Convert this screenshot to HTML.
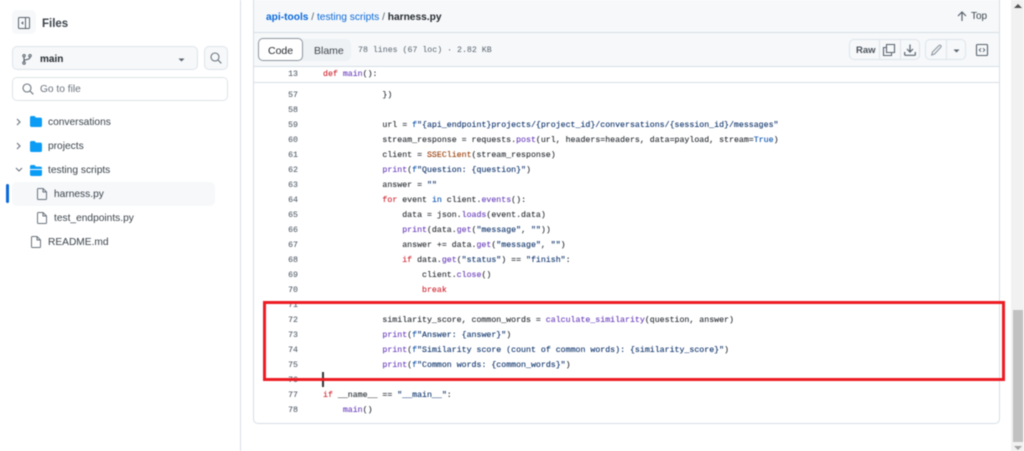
<!DOCTYPE html>
<html lang="en"><head><meta charset="utf-8"><title>harness.py</title>
<style>
html,body{margin:0;padding:0;width:1024px;height:451px;overflow:hidden;background:#fff}
body{font-family:"Liberation Sans",sans-serif;color:#1f2328;position:relative}
#p{position:absolute;left:0;top:0;width:1024px;height:451px;filter:blur(.4px)}
.a{position:absolute;box-sizing:border-box}
.t{position:absolute;white-space:nowrap;line-height:16px;font-size:10.2px;margin-top:1px}
.c{position:absolute;left:323px;margin-top:2px;font:8.25px/15px "Liberation Mono",monospace;white-space:pre;color:#24292f;-webkit-text-stroke:.1px currentColor}
.n{position:absolute;left:270px;width:28px;margin-top:2px;text-align:right;font:8.25px/15px "Liberation Mono",monospace;color:#59636e;-webkit-text-stroke:.1px currentColor}
.k{color:#cf222e}.f{color:#6639ba}.s{color:#0a3069}.b{color:#0550ae}.y{color:#953800}
svg{position:absolute;overflow:visible}
</style></head><body><div id="p">

<!-- sidebar -->
<div class="a" style="left:240px;top:0;width:1px;height:451px;background:#d8dfe6"></div>
<div class="a" style="left:12px;top:10px;width:24px;height:24px;border-radius:5px;background:#f6f8fa"></div>
<svg style="left:18px;top:17px" width="12" height="12" viewBox="0 0 12 12" fill="none" stroke="#59636e" stroke-width="1"><rect x=".5" y=".5" width="11" height="11" rx="1"/><path d="M7.5 .5v11"/><path d="M5 4.5v3L3.4 6z" fill="#59636e" stroke-width=".5"/></svg>
<div class="t" style="left:42px;top:15px;font-size:11.5px;font-weight:700;color:#3b434b">Files</div>

<div class="a" style="left:12px;top:46px;width:186px;height:24px;border:1px solid #dfe4ea;border-radius:5px;background:#f6f8fa"></div>
<svg style="left:22px;top:54px" width="10" height="11" viewBox="0 0 10 11" fill="none" stroke="#59636e" stroke-width="1.1"><circle cx="2" cy="1.8" r="1.2"/><circle cx="2" cy="9" r="1.2"/><circle cx="8" cy="1.8" r="1.2"/><path d="M2 3v4.800M8 3c0 2.500-3 2.300-6 3.300"/></svg>
<div class="t" style="left:40px;top:51px;font-weight:700;color:#25292e;font-size:10px">main</div>
<svg style="left:178px;top:58px" width="7" height="4"><path d="M.5 .5h6L3.500 3.500z" fill="#59636e"/></svg>
<div class="a" style="left:204px;top:46px;width:24px;height:24px;border:1px solid #dfe4ea;border-radius:5px;background:#f6f8fa"></div>
<svg style="left:210px;top:52px" width="12" height="12" viewBox="0 0 12 12" fill="none" stroke="#6a737d" stroke-width="1.100"><circle cx="5" cy="5" r="4"/><path d="M8 8l3.300 3.300"/></svg>
<div class="a" style="left:12px;top:77px;width:216px;height:24px;border:1px solid #dfe4ea;border-radius:5px;background:#fff"></div>
<svg style="left:22px;top:83px" width="12" height="12" viewBox="0 0 12 12" fill="none" stroke="#6a737d" stroke-width="1.100"><circle cx="5" cy="5" r="4"/><path d="M8 8l3.300 3.300"/></svg>
<div class="t" style="left:40px;top:81px;color:#6a737d">Go to file</div>

<svg style="left:16px;top:118px" width="6" height="8" fill="none" stroke="#6a737d" stroke-width="1.100"><path d="M1 1l3 3-3 3"/></svg>
<svg style="left:30px;top:116px" width="12" height="11"><path d="M0 1.500C0 .6.600 0 1.500 0h3l1.500 1.600h4.500c.9 0 1.500.6 1.500 1.500v6.400c0 .9-.6 1.500-1.500 1.500h-9C.6 11 0 10.400 0 9.500z" fill="#0b9cf5"/></svg>
<div class="t" style="left:48px;top:114px;color:#3b434b">conversations</div>
<svg style="left:16px;top:142px" width="6" height="8" fill="none" stroke="#6a737d" stroke-width="1.100"><path d="M1 1l3 3-3 3"/></svg>
<svg style="left:30px;top:141px" width="12" height="11"><path d="M0 1.500C0 .6.600 0 1.500 0h3l1.500 1.600h4.500c.9 0 1.500.6 1.500 1.500v6.400c0 .9-.6 1.500-1.500 1.500h-9C.6 11 0 10.400 0 9.500z" fill="#0b9cf5"/></svg>
<div class="t" style="left:48px;top:138px;color:#3b434b">projects</div>
<svg style="left:15px;top:167px" width="8" height="6" fill="none" stroke="#6a737d" stroke-width="1.100"><path d="M1 1l3 3 3-3"/></svg>
<svg style="left:30px;top:165px" width="12" height="11"><path d="M0 1.500C0 .6.600 0 1.500 0h3l1.500 1.600h4.500c.9 0 1.500.6 1.500 1.500V4H0zM0 5h12v4.500c0 .9-.6 1.500-1.500 1.500h-9C.6 11 0 10.400 0 9.500z" fill="#0b9cf5"/></svg>
<div class="t" style="left:48px;top:162px;color:#3b434b">testing scripts</div>

<div class="a" style="left:12px;top:182px;width:203px;height:24px;border-radius:5px;background:#f6f8fa"></div>
<div class="a" style="left:6px;top:184px;width:3px;height:19px;border-radius:2px;background:#0969da"></div>
<svg style="left:37px;top:188px" width="10" height="12" fill="none" stroke="#6a737d" stroke-width="1"><path d="M.5 1.500c0-.6.400-1 1-1h4.500l3.500 3.500v6.500c0 .6-.4 1-1 1h-7c-.6 0-1-.4-1-1zM6 .5v3.500h3.500"/></svg>
<div class="t" style="left:54px;top:186px;color:#3b434b">harness.py</div>
<svg style="left:37px;top:212px" width="10" height="12" fill="none" stroke="#6a737d" stroke-width="1"><path d="M.5 1.500c0-.6.400-1 1-1h4.500l3.500 3.500v6.500c0 .6-.4 1-1 1h-7c-.6 0-1-.4-1-1zM6 .5v3.500h3.500"/></svg>
<div class="t" style="left:54px;top:210px;color:#3b434b">test_endpoints.py</div>
<svg style="left:31px;top:236px" width="10" height="12" fill="none" stroke="#6a737d" stroke-width="1"><path d="M.5 1.500c0-.6.400-1 1-1h4.500l3.500 3.500v6.500c0 .6-.4 1-1 1h-7c-.6 0-1-.4-1-1zM6 .5v3.500h3.500"/></svg>
<div class="t" style="left:48px;top:234px;color:#3b434b">README.md</div>

<!-- file box -->
<div class="a" style="left:253px;top:-6px;width:747px;height:430px;border:1px solid #d8dfe6;border-radius:5px;background:#fff"></div>
<div class="a" style="left:254px;top:0;width:745px;height:66px;background:#f6f8fa"></div>
<div class="a" style="left:254px;top:32px;width:745px;height:1px;background:#d8dfe6"></div>
<div class="a" style="left:254px;top:66px;width:745px;height:1px;background:#d8dfe6"></div>
<div class="a" style="left:254px;top:82px;width:745px;height:1px;background:#d8dfe6"></div>

<div class="t" style="left:266px;top:9px;color:#57606a"><span style="color:#0969da;font-weight:700">api-tools</span> / <span style="color:#0969da">testing scripts</span> / <b style="color:#25292e">harness.py</b></div>
<svg style="left:957px;top:11px" width="10" height="10" fill="none" stroke="#59636e" stroke-width="1.200"><path d="M5 10V1M1 5l4-4 4 4"/></svg>
<div class="t" style="left:971px;top:8px;color:#3b434b;font-size:10px">Top</div>

<div class="a" style="left:258px;top:39px;width:93px;height:22px;border-radius:5px;background:#eff2f5"></div>
<div class="a" style="left:258px;top:38px;width:45px;height:23px;border:1px solid #8c959f;border-radius:5px;background:#fff"></div>
<div class="t" style="left:268px;top:42px;color:#25292e;font-size:10.5px">Code</div>
<div class="t" style="left:314px;top:42px;color:#3b434b;font-size:10.5px">Blame</div>
<div class="t" style="left:358px;top:42px;font:8.25px/16px 'Liberation Mono',monospace;color:#59636e">78 lines (67 loc) · 2.82 KB</div>

<div class="a" style="left:849px;top:39px;width:71px;height:21px;border:1px solid #dfe4ea;border-radius:5px;background:#f6f8fa"></div>
<div class="a" style="left:879px;top:40px;width:1px;height:19px;background:#dfe4ea"></div>
<div class="a" style="left:900px;top:40px;width:1px;height:19px;background:#dfe4ea"></div>
<div class="t" style="left:856px;top:42px;font-size:9.500px;font-weight:700;color:#4a5159">Raw</div>
<svg style="left:883px;top:44px" width="12" height="12" fill="none" stroke="#59636e" stroke-width="1.100"><path d="M3.500 .5h8v8h-8zM3.500 3.500H.5v8h8V8.500"/></svg>
<svg style="left:904px;top:44px" width="12" height="12" fill="none" stroke="#59636e" stroke-width="1.200"><path d="M6 .5v7M3 5l3 3 3-3M.7 8v2.500c0 .5.400.8.800.8h9c.4 0 .8-.3.800-.8V8"/></svg>
<div class="a" style="left:925px;top:39px;width:41px;height:21px;border:1px solid #dfe4ea;border-radius:5px;background:#f6f8fa"></div>
<div class="a" style="left:946px;top:40px;width:1px;height:19px;background:#dfe4ea"></div>
<svg style="left:931px;top:44px" width="11" height="12" fill="none" stroke="#8c959f" stroke-width="1.100"><path d="M.7 11l.8-3L8 1.500c.5-.5 1.200-.5 1.700 0s.5 1.200 0 1.700L3.500 10z"/></svg>
<svg style="left:953px;top:49px" width="7" height="4"><path d="M.5 .5h6L3.500 3.500z" fill="#59636e"/></svg>
<svg style="left:976px;top:44px" width="12" height="12" fill="none" stroke="#59636e" stroke-width="1.100"><rect x=".5" y=".5" width="11" height="11" rx="1"/><path d="M5 4.200L3.200 6 5 7.800M7 4.200L8.800 6 7 7.800" stroke-width=".9"/></svg>

<!-- code -->
<div class="n" style="top:65px">13</div><div class="c" style="top:65px"><span class="k">def</span> <span class="f">main</span>():</div>

<div class="n" style="top:86px">57</div><div class="c" style="top:86px">            })</div>
<div class="n" style="top:101px">58</div>
<div class="n" style="top:116px">59</div><div class="c" style="top:116px">            url = <span class="b">f</span><span class="s">"{api_endpoint}projects/{project_id}/conversations/{session_id}/messages"</span></div>
<div class="n" style="top:131px">60</div><div class="c" style="top:131px">            stream_response = requests.<span class="f">post</span>(url, headers=headers, data=payload, stream=<span class="b">True</span>)</div>
<div class="n" style="top:146px">61</div><div class="c" style="top:146px">            client = <span class="y">SSEClient</span>(stream_response)</div>
<div class="n" style="top:161px">62</div><div class="c" style="top:161px">            <span class="f">print</span>(<span class="b">f</span><span class="s">"Question: {question}"</span>)</div>
<div class="n" style="top:176px">63</div><div class="c" style="top:176px">            answer = <span class="s">""</span></div>
<div class="n" style="top:191px">64</div><div class="c" style="top:191px">            <span class="k">for</span> event <span class="b">in</span> client.<span class="f">events</span>():</div>
<div class="n" style="top:206px">65</div><div class="c" style="top:206px">                data = json.<span class="f">loads</span>(event.data)</div>
<div class="n" style="top:221px">66</div><div class="c" style="top:221px">                <span class="f">print</span>(data.<span class="f">get</span>(<span class="s">"message"</span>, <span class="s">""</span>))</div>
<div class="n" style="top:236px">67</div><div class="c" style="top:236px">                answer += data.<span class="f">get</span>(<span class="s">"message"</span>, <span class="s">""</span>)</div>
<div class="n" style="top:251px">68</div><div class="c" style="top:251px">                <span class="k">if</span> data.<span class="f">get</span>(<span class="s">"status"</span>) == <span class="s">"finish"</span>:</div>
<div class="n" style="top:266px">69</div><div class="c" style="top:266px">                    client.<span class="f">close</span>()</div>
<div class="n" style="top:281px">70</div><div class="c" style="top:281px">                    <span class="k">break</span></div>
<div class="n" style="top:296px">71</div>
<div class="n" style="top:311px">72</div><div class="c" style="top:311px">            similarity_score, common_words = <span class="f">calculate_similarity</span>(question, answer)</div>
<div class="n" style="top:326px">73</div><div class="c" style="top:326px">            <span class="f">print</span>(<span class="b">f</span><span class="s">"Answer: {answer}"</span>)</div>
<div class="n" style="top:341px">74</div><div class="c" style="top:341px">            <span class="f">print</span>(<span class="b">f</span><span class="s">"Similarity score (count of common words): {similarity_score}"</span>)</div>
<div class="n" style="top:356px">75</div><div class="c" style="top:356px">            <span class="f">print</span>(<span class="b">f</span><span class="s">"Common words: {common_words}"</span>)</div>
<div class="n" style="top:371px">76</div>
<div class="n" style="top:386px">77</div><div class="c" style="top:386px"><span class="k">if</span> __name__ == <span class="s">"__main__"</span>:</div>
<div class="n" style="top:401px">78</div><div class="c" style="top:401px">    <span class="f">main</span>()</div>

<div class="a" style="left:322px;top:372px;width:2px;height:15px;background:#333"></div>
<div class="a" style="left:263px;top:301px;width:742px;height:80px;border:3.500px solid #ed1c24"></div>

<!-- scrollbar -->
<div class="a" style="left:1011px;top:0;width:13px;height:451px;background:#f1f1f1"></div>
<div class="a" style="left:1013px;top:310px;width:10px;height:132px;background:#c1c1c1"></div>
<svg style="left:1014px;top:4px" width="8" height="4"><path d="M4 0l4 4H0z" fill="#505050"/></svg>
<svg style="left:1014px;top:446px" width="8" height="4"><path d="M0 0h8L4 4z" fill="#a3a3a3"/></svg>
</div></body></html>
